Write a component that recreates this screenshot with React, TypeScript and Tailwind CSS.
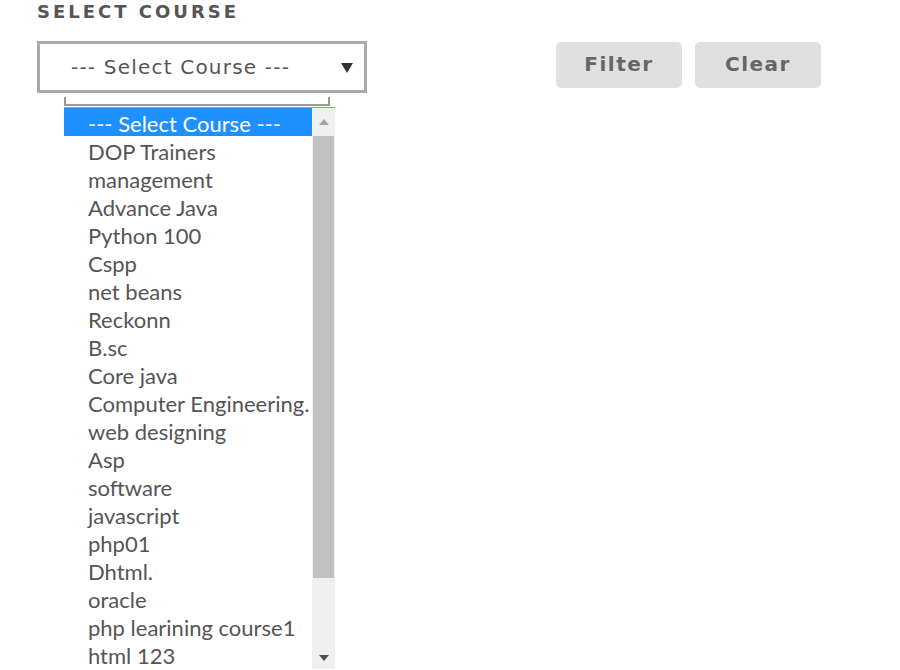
import React from "react";

const items = [
  "--- Select Course ---",
  "DOP Trainers",
  "management",
  "Advance Java",
  "Python 100",
  "Cspp",
  "net beans",
  "Reckonn",
  "B.sc",
  "Core java",
  "Computer Engineering.",
  "web designing",
  "Asp",
  "software",
  "javascript",
  "php01",
  "Dhtml.",
  "oracle",
  "php learining course1",
  "html 123",
];

export default function App() {
  return (
    <div className="w-[900px] h-[670px] bg-white overflow-hidden relative">
      <div className="pl-[37px] pt-[1px]">
        <div
          className="text-[18px] font-bold tracking-[3px] text-[#555] leading-[22px]"
          style={{ fontFamily: '"DejaVu Sans", sans-serif' }}
        >
          SELECT COURSE
        </div>
        <div className="flex items-start mt-[18px]">
          <div className="w-[330px] h-[52px] border-[3px] border-[#aaaaaa] flex items-center relative">
            <span
              className="ml-[31px] text-[20px] text-[#555] tracking-[1.2px]"
              style={{ fontFamily: '"DejaVu Sans", sans-serif' }}
            >
              --- Select Course ---
            </span>
            <svg className="absolute right-[11px] top-[19px]" width="12" height="10" viewBox="0 0 12 10">
              <polygon points="0,0 12,0 6,10" fill="#333" />
            </svg>
          </div>
          <div className="flex gap-[13px] ml-[189px] mt-[1px]">
            <button
              className="w-[126px] h-[46px] rounded-[5px] bg-[#e0e0e0] text-[#666] text-[20px] font-bold tracking-[1.5px] pb-[2px]"
              style={{ fontFamily: '"DejaVu Sans", sans-serif' }}
            >
              Filter
            </button>
            <button
              className="w-[126px] h-[46px] rounded-[5px] bg-[#e0e0e0] text-[#666] text-[20px] font-bold tracking-[1.5px] pb-[2px]"
              style={{ fontFamily: '"DejaVu Sans", sans-serif' }}
            >
              Clear
            </button>
          </div>
        </div>
        <div className="ml-[27px] mt-[4px] w-[266px] h-[9px] border-l-2 border-r-2 border-b-2 border-[#999]" />
        <div className="ml-[27px] mt-[1px] w-[271px] border-t border-[#7aa7e0] flex">
          <div className="w-[248px]">
            {items.map((it, i) => (
              <div
                key={i}
                className={
                  "h-[28.05px] pl-[24px] pt-[2px] flex items-center text-[22px] whitespace-nowrap overflow-hidden " +
                  (i === 0 ? "bg-[#1e90ff] text-white" : "text-[#555]")
                }
                style={{ fontFamily: "Lato, sans-serif" }}
              >
                {it}
              </div>
            ))}
          </div>
          <div className="w-[23px] bg-[#f0f0f0] flex flex-col">
            <div className="h-[28px] flex items-center justify-center">
              <svg width="10" height="6" viewBox="0 0 10 6">
                <polygon points="0,6 10,6 5,0" fill="#a3a3a3" />
              </svg>
            </div>
            <div className="h-[442px] bg-[#c1c1c1] mx-[1px]" />
            <div className="h-[70px]" />
            <div className="h-[20px] flex items-center justify-center">
              <svg width="10" height="6" viewBox="0 0 10 6">
                <polygon points="0,0 10,0 5,6" fill="#505050" />
              </svg>
            </div>
          </div>
        </div>
      </div>
    </div>
  );
}
